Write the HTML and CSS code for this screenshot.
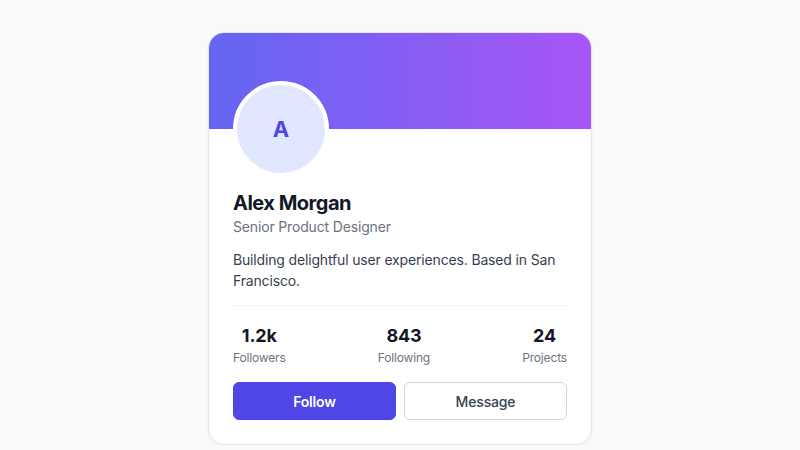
FILE: index.html
```html
<!DOCTYPE html>
<html lang="en">
<head>
  <meta charset="UTF-8">
  <title>Profile</title>
  <link rel="stylesheet" href="styles.css">
</head>
<body>

  <div class="card">
    <div class="cover"></div>
    <div class="content">
      <div class="avatar">A</div>
      <h2 class="name">Alex Morgan</h2>
      <p class="role">Senior Product Designer</p>
      <p class="bio">Building delightful user experiences. Based in San Francisco.</p>

      <div class="stats">
        <div class="stat">
          <div class="num">1.2k</div>
          <div class="label">Followers</div>
        </div>
        <div class="stat">
          <div class="num">843</div>
          <div class="label">Following</div>
        </div>
        <div class="stat">
          <div class="num">24</div>
          <div class="label">Projects</div>
        </div>
      </div>

      <div class="actions">
        <button class="btn primary">Follow</button>
        <button class="btn outline">Message</button>
      </div>
    </div>
  </div>

</body>
</html>
```

FILE: styles.css
```css
body {
  margin: 0;
  padding: 32px 0 0;
  font-family: Inter, "Noto Sans", sans-serif;
  letter-spacing: -0.01em;
  background: #f8fafc;
  display: flex;
  justify-content: center;
}

.card {
  width: 382px;
  background: #fff;
  border: 1px solid #e5e7eb;
  border-radius: 16px;
  overflow: hidden;
  box-shadow: 0 1px 3px rgba(0, 0, 0, 0.06);
}

.cover {
  height: 96px;
  background: linear-gradient(to right, #6366f1, #a855f7);
}

.content {
  padding: 0 24px 24px;
}

.avatar {
  width: 88px;
  height: 88px;
  margin-top: -48px;
  border: 4px solid #fff;
  border-radius: 50%;
  background: #e0e7ff;
  color: #4f46e5;
  font-size: 22px;
  font-weight: 700;
  display: flex;
  align-items: center;
  justify-content: center;
}

.name {
  margin: 12px 0 0;
  font-size: 20px;
  line-height: 28px;
  font-weight: 700;
  letter-spacing: -0.025em;
  color: #111827;
}

.role {
  margin: 0;
  font-size: 14px;
  line-height: 20px;
  color: #6b7280;
}

.bio {
  margin: 12px 0 0;
  font-size: 14px;
  line-height: 21px;
  color: #374151;
}

.stats {
  margin-top: 14px;
  border-top: 1px solid #f3f4f6;
  padding: 16px 0;
  display: flex;
  justify-content: space-between;
}

.stat {
  text-align: center;
}

.num {
  font-size: 18px;
  line-height: 28px;
  font-weight: 700;
  color: #111827;
}

.label {
  font-size: 12px;
  line-height: 16px;
  color: #6b7280;
}

.actions {
  display: flex;
  gap: 8px;
}

.btn {
  flex: 1;
  height: 38px;
  border-radius: 6px;
  font-family: inherit;
  font-size: 14px;
  font-weight: 500;
  letter-spacing: inherit;
  cursor: pointer;
}

.primary {
  background: #4f46e5;
  border: 1px solid #4f46e5;
  color: #fff;
  font-weight: 600;
}

.outline {
  background: #fff;
  border: 1px solid #d1d5db;
  color: #374151;
}
```
